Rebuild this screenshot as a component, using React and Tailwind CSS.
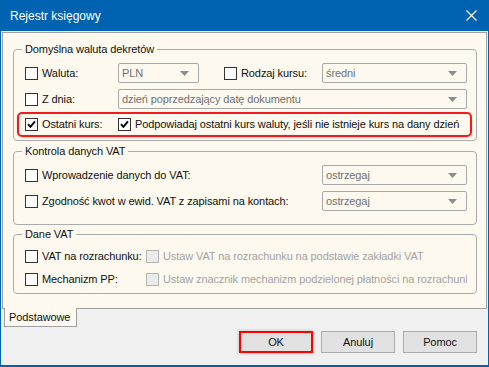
import clsx from 'clsx'

function Box({ checked, disabled }) {
  return (
    <span
      className={clsx(
        'w-[13px] h-[13px] border flex items-center justify-center shrink-0',
        disabled ? 'border-[#b4b4b4] bg-[#ebebeb]' : 'border-[#333333] bg-white'
      )}
    >
      {checked && (
        <svg width="9" height="9" viewBox="0 0 9 9">
          <path d="M1 4.2 L3.4 6.8 L8 1.4" stroke="#000" strokeWidth="1.9" fill="none" />
        </svg>
      )}
    </span>
  )
}

function Select({ value, className }) {
  return (
    <div
      className={clsx(
        'h-[20px] border border-[#a8a8a8] rounded-[2px] flex items-center pl-[3px] pr-[9px] text-[#707070] shrink-0',
        className
      )}
    >
      <span className="flex-1 truncate">{value}</span>
      <svg width="9" height="5" viewBox="0 0 9 5">
        <path d="M0 0 H9 L4.5 5 Z" fill="#8c8c8c" />
      </svg>
    </div>
  )
}

function Check({ label, checked, width, disabled }) {
  return (
    <div className={clsx('flex items-center gap-[4px] shrink-0', width)}>
      <Box checked={checked} disabled={disabled} />
      <span className={clsx('whitespace-nowrap', disabled ? 'text-[#a3a3a3]' : 'text-[#111]')}>{label}</span>
    </div>
  )
}

function Group({ title, className, children }) {
  return (
    <fieldset className={clsx('border border-[#ababab] rounded-[4px] min-w-0', className)}>
      <legend className="ml-[8px] px-[3px] leading-[13px] text-[#111]">{title}</legend>
      {children}
    </fieldset>
  )
}

export default function App() {
  return (
    <div className="w-[489px] h-[367px] bg-[#0063b1] px-px pb-[2px] flex flex-col font-['Liberation_Sans',Arial,sans-serif] text-[11px] tracking-[-0.1px]">
      <div className="h-[31px] shrink-0 flex items-center justify-between pl-[9px] pr-[11px] text-white text-[12px] tracking-normal">
        <span>Rejestr księgowy</span>
        <svg width="11" height="11" viewBox="0 0 11 11">
          <path d="M0.5 0.5 L10.5 10.5 M10.5 0.5 L0.5 10.5" stroke="#fff" strokeWidth="1.1" />
        </svg>
      </div>

      <div className="flex-1 bg-[#f0f0f0] px-px pt-px flex flex-col">
        <div className="flex-1 bg-[#fdf9ef] border border-[#a0a0a0] pl-[10px] pr-[9px] pt-[10px] flex flex-col">
          <Group title="Domyślna waluta dekretów" className="pt-[7px] pb-[3px]">
            <div className="flex flex-col">
              <div className="flex items-center h-[20px] pl-[11px]">
                <Check label="Waluta:" width="w-[93px]" />
                <Select value="PLN" className="w-[81px]" />
                <Check label="Rodzaj kursu:" width="w-[98px] ml-[25px]" />
                <Select value="średni" className="w-[145px]" />
              </div>
              <div className="flex items-center h-[20px] pl-[11px] mt-[6px]">
                <Check label="Z dnia:" width="w-[93px]" />
                <Select value="dzień poprzedzający datę dokumentu" className="w-[349px]" />
              </div>
              <div className="flex items-center h-[25px] ml-[3px] mr-[4px] mt-[3px] border-2 border-[#f21a1a] rounded-[5px] pl-[6px] shadow-[0_1px_2px_rgba(0,0,0,0.15)]">
                <Check label="Ostatni kurs:" checked width="w-[93px]" />
                <Check label="Podpowiadaj ostatni kurs waluty, jeśli nie istnieje kurs na dany dzień" checked />
              </div>
            </div>
          </Group>

          <Group title="Kontrola danych VAT" className="mt-[4px] pt-[7px] pb-[13px]">
            <div className="flex items-center h-[20px] pl-[11px]">
              <Check label="Wprowadzenie danych do VAT:" width="w-[297px]" />
              <Select value="ostrzegaj" className="w-[145px]" />
            </div>
            <div className="flex items-center h-[20px] pl-[11px] mt-[6px]">
              <Check label="Zgodność kwot w ewid. VAT z zapisami na kontach:" width="w-[297px]" />
              <Select value="ostrzegaj" className="w-[145px]" />
            </div>
          </Group>

          <Group title="Dane VAT" className="mt-[3px] pt-[5px] pb-[4px]">
            <div className="flex items-center h-[20px] pl-[11px] mr-[9px] overflow-hidden">
              <Check label="VAT na rozrachunku:" width="w-[121px]" />
              <Check label="Ustaw VAT na rozrachunku na podstawie zakładki VAT" disabled />
            </div>
            <div className="flex items-center h-[20px] pl-[11px] mr-[9px] mt-[3px] overflow-hidden">
              <Check label="Mechanizm PP:" width="w-[121px]" />
              <Check label="Ustaw znacznik mechanizm podzielonej płatności na rozrachunki" disabled />
            </div>
          </Group>
        </div>

        <div className="flex shrink-0">
          <div className="relative -mt-px ml-[2px] w-[73px] h-[19px] bg-[#fdf9ef] border-x border-b border-[#a0a0a0] pl-[4px] flex items-center text-[#111]">
            Podstawowe
          </div>
        </div>

        <div className="flex justify-end gap-[8px] pr-[10px] mt-[4px] mb-[12px] shrink-0">
          <button className="w-[74px] h-[22px] bg-[#e1e1e1] border-2 border-[#ff0000] text-[#111] shadow-[0_0_3px_rgba(0,0,0,0.25)]">OK</button>
          <button className="w-[74px] h-[22px] bg-[#e1e1e1] border border-[#adadad] text-[#111]">Anuluj</button>
          <button className="w-[74px] h-[22px] bg-[#e1e1e1] border border-[#adadad] text-[#111]">Pomoc</button>
        </div>
      </div>
    </div>
  )
}
